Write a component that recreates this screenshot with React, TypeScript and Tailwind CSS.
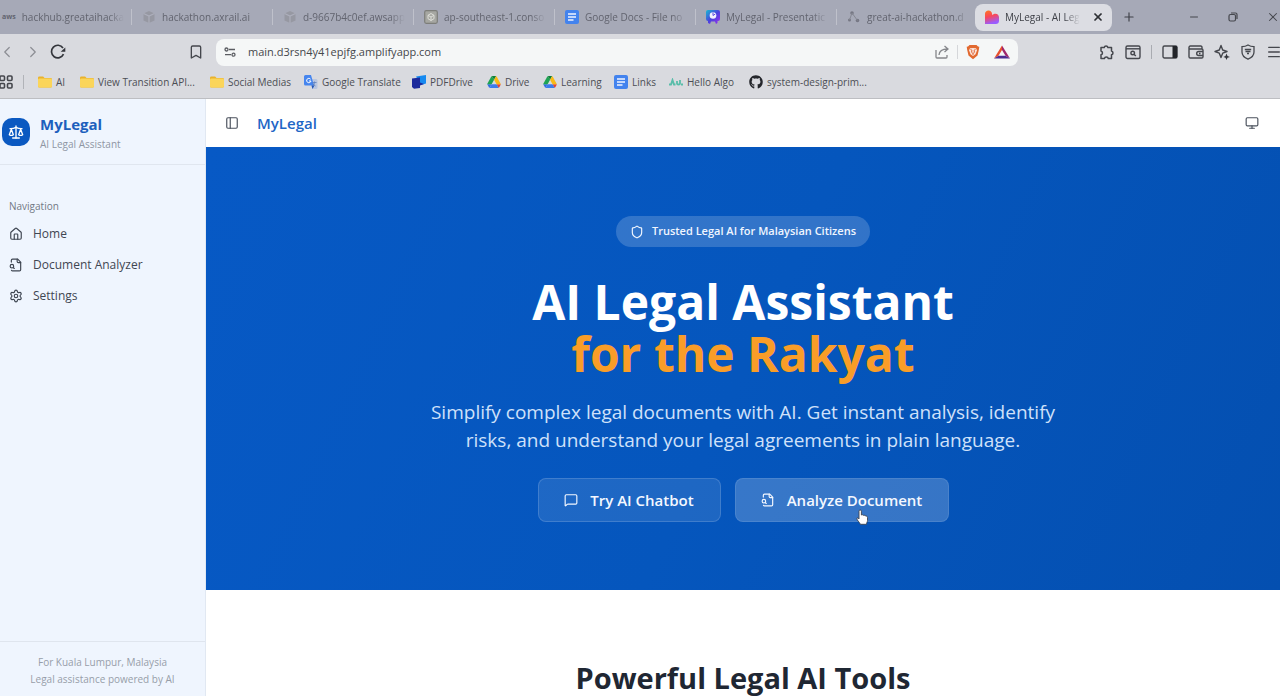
import type { ReactNode } from 'react';
import {
  Bookmark,
  ChevronLeft,
  ChevronRight,
  House,
  Menu,
  MessageSquare,
  Minus,
  Monitor,
  PanelLeft,
  Plus,
  Scale,
  Settings,
  Shield,
  X,
} from 'lucide-react';
import { FaGithub } from 'react-icons/fa';

const DocsIcon = () => (
  <svg viewBox="0 0 14 14" className="size-3.5 shrink-0">
    <rect width="14" height="14" rx="2" fill="#4383ee" />
    <path d="M3 4h8M3 7h8M3 10h5.5" stroke="#f1f5ff" strokeWidth="1.5" />
  </svg>
);

const CubeIcon = () => (
  <svg viewBox="0 0 14 14" className="size-3.5 shrink-0 opacity-60">
    <path d="M7 1 12.500 3.500v7L7 13 1.500 10.500v-7z" fill="#8d8d95" />
    <path d="M7 6v7M1.500 3.500 7 6l5.500-2.500" fill="none" stroke="#b1b3bf" strokeWidth="1.200" />
  </svg>
);

const ConsoleIcon = () => (
  <svg viewBox="0 0 14 14" className="size-3.5 shrink-0">
    <rect x=".7" y=".7" width="12.600" height="12.600" rx="1.500" fill="#a6a7a2" stroke="#7d7e7a" strokeWidth="1.200" />
    <path d="m7 3.500 3 1.800v3.400l-3 1.800-3-1.800V5.300zM4 5.300l3 1.700 3-1.700M7 7v3.500" fill="none" stroke="#dedfd9" />
  </svg>
);

const FolderIcon = () => (
  <svg viewBox="0 0 15 12" className="h-3 w-3.5 shrink-0">
    <path d="M1.500 0h4L7 1.600h6.500A1.500 1.500 0 0 1 15 3v7.500A1.500 1.500 0 0 1 13.500 12h-12A1.500 1.500 0 0 1 0 10.500v-9A1.500 1.500 0 0 1 1.500 0z" fill="#e9b22c" />
    <path d="M1.500 2.200h12A1.500 1.500 0 0 1 15 3.700v6.800a1.500 1.500 0 0 1-1.500 1.500h-12A1.500 1.500 0 0 1 0 10.500V3.700A1.500 1.500 0 0 1 1.500 2.200z" fill="#fbd55a" />
  </svg>
);

const DriveIcon = () => (
  <svg viewBox="0 0 87 78" className="h-3 w-3.5 shrink-0">
    <path d="m7 67 3 6c1 2 2 3 4 4l14-24H0c0 2 0 3 1 4z" fill="#2f6ee0" />
    <path d="M44 25 30 1c-2 1-3 2-4 3L1 48c-1 2-1 3-1 5h28z" fill="#1ea353" />
    <path d="M73 77c2-1 3-2 4-3l9-16c1-2 1-3 1-5H60l6 12z" fill="#e44335" />
    <path d="M44 25 57 1c-1-1-3-1-4-1H34c-2 0-3 0-4 1z" fill="#11803a" />
    <path d="M60 53H28L14 77c1 1 3 1 4 1h51c2 0 3 0 4-1z" fill="#3b7cec" />
    <path d="M73 26 61 4c-1-1-2-2-4-3L44 25l16 28h27c0-2 0-3-1-5z" fill="#f9ba16" />
  </svg>
);

const TranslateIcon = () => (
  <svg viewBox="0 0 14 14" className="size-3.5 shrink-0">
    <path d="M5 4h7a1.500 1.500 0 0 1 1.500 1.500v7A1.500 1.500 0 0 1 12 14H8.500z" fill="#b9c6e0" />
    <path d="M1.500 0H7l3 10.500H1.500A1.500 1.500 0 0 1 0 9V1.500A1.500 1.500 0 0 1 1.500 0z" fill="#4685ee" />
    <path d="M6.600 4.200A2.200 2.200 0 1 0 7 6H5" fill="none" stroke="#fff" />
    <path d="M8.500 7.500h4M10.500 6.500v1c0 1.500-1 2.500-2 3M9 8.500c.5 1 1.500 2 2.500 2.500" fill="none" stroke="#5c7fbd" strokeWidth=".8" />
    <path d="m7.500 10.500 1 3.500 2-3.500z" fill="#2457b5" />
  </svg>
);

const PdfDriveIcon = () => (
  <svg viewBox="0 0 14 14" className="size-3.5 shrink-0">
    <path d="M4 1.500 14 0v8.500L9 10z" fill="#168af0" />
    <path d="M0 3.500 8 2.500v5L12 9l-4 1.500V13l-6 .8L0 12z" fill="#1c2a9c" />
  </svg>
);

const PresentationIcon = () => (
  <svg viewBox="0 0 14 14" className="size-3.5 shrink-0">
    <defs>
      <linearGradient id="deck" x1="0" y1="0" x2="1" y2="1">
        <stop offset="0" stopColor="#16bcd2" />
        <stop offset=".5" stopColor="#4a42dd" />
        <stop offset="1" stopColor="#9a30ee" />
      </linearGradient>
    </defs>
    <path d="M2 0h10a2 2 0 0 1 2 2v7a2 2 0 0 1-2 2h-.5v2l-1.500 1-1-2.500H5L4 14l-2-1v-2a2 2 0 0 1-2-2V2a2 2 0 0 1 2-2z" fill="url(#deck)" />
    <circle cx="7" cy="5.500" r="3.300" fill="#f3f1ff" />
    <path d="M7 5.500V2.500M7 5.500l2.300-1.500" stroke="#5a49de" />
  </svg>
);

const HeartIcon = () => (
  <svg viewBox="0 0 14 14" className="size-3.5 shrink-0">
    <defs>
      <linearGradient id="heart" x1="0" y1="0" x2=".3" y2="1">
        <stop offset="0" stopColor="#ff7a1c" />
        <stop offset=".5" stopColor="#f7475c" />
        <stop offset="1" stopColor="#9a5cff" />
      </linearGradient>
    </defs>
    <path d="M0 3.800C0 1.700 1.600.4 3.500.4S7 1.700 7 3.800v1.500c1-1 2-1.500 3.500-1.500C12.600 3.800 14 5.500 14 7.300v3.400A3.200 3.200 0 0 1 10.800 14H0z" fill="url(#heart)" />
  </svg>
);

const NodesIcon = () => (
  <svg viewBox="0 0 14 14" className="size-3.5 shrink-0" fill="#757783">
    <circle cx="5" cy="3" r="1.800" />
    <circle cx="2.500" cy="10" r="1.500" />
    <circle cx="10.500" cy="10.500" r="1.800" />
    <path d="M5 3 2.500 10M5 3l5.500 7.500" stroke="#858792" />
  </svg>
);

const AlgoIcon = () => (
  <svg viewBox="0 0 14 8" className="h-2 w-3.5 shrink-0" fill="none" stroke="#58bda9" strokeWidth="1.800">
    <path d="M0 6.500h2L3.500 2 5 6.500h1.500M8 3v2.500C8 7 11 7 11 5.500V2M12 6.500h2" />
  </svg>
);

const ReloadIcon = () => (
  <svg viewBox="0 0 16 16" className="size-4">
    <path d="M13.500 10.200A6.300 6.300 0 1 1 13 4" fill="none" stroke="#33353b" strokeWidth="1.700" />
    <path d="M15.300 3.500v4.300h-4.600z" fill="#33353b" />
  </svg>
);

const TuneIcon = () => (
  <svg viewBox="0 0 12 12" className="size-3" fill="none" stroke="#5b5d62" strokeWidth="1.300">
    <circle cx="2.500" cy="3.500" r="1.500" />
    <circle cx="9.500" cy="8.700" r="1.500" />
    <path d="M5 3.500h6M1 8.700h6" />
  </svg>
);

const AppsIcon = () => (
  <svg viewBox="0 0 14 14" className="size-3.5" fill="none" stroke="#45474d" strokeWidth="1.600">
    <rect x="1" y="1" width="4.500" height="4.500" rx="1" />
    <rect x="8.500" y="1" width="4.500" height="4.500" rx="1" />
    <rect x="1" y="8.500" width="4.500" height="4.500" rx="1" />
    <rect x="8.500" y="8.500" width="4.500" height="4.500" rx="1" />
  </svg>
);

const ShareIcon = () => (
  <svg viewBox="0 0 14 14" className="size-3.5" fill="none" stroke="#85878b" strokeWidth="1.300">
    <path d="M1 5v7a1 1 0 0 0 1 1h9a1 1 0 0 0 1-1v-2" />
    <path d="M4 10c.3-3.500 2.500-6 8.500-6M9.500 1 13 4 9.500 7" />
  </svg>
);

const BraveIcon = () => (
  <svg viewBox="0 0 14 16" className="h-4 w-3.5">
    <path d="M3.500 1h7L12 2.500l1.300.2L12.800 6l-1.300 5.500L7 15.200 2.500 11.500 1.200 6 .7 2.700 2 2.500z" fill="#e2692f" />
    <path d="M4 4.300 7 4l3 .3 1 2-1.500 4L7 12l-2.500-1.700L3 6.300z" fill="#fae4da" />
    <path d="m4.500 5.500 1.500.8-.5 2L7 9.500l1.500-1.200-.5-2 1.500-.8M7 9.500V11" fill="none" stroke="#e2693a" />
  </svg>
);

const TriangleIcon = () => (
  <svg viewBox="0 0 16 14" className="h-3.5 w-4">
    <path d="M8 .5 0 13.500l4.500-2.700L8 5z" fill="#e8502c" />
    <path d="M8 .5 16 13.500l-4.500-2.700L8 5z" fill="#a0266b" />
    <path d="M0 13.500h16l-4.500-2.800h-7z" fill="#4e2c92" />
  </svg>
);

const PuzzleIcon = () => (
  <svg viewBox="0 0 16 16" className="size-4" fill="none" stroke="#45474d" strokeWidth="1.500" strokeLinejoin="round">
    <path d="M2 3.500h3.200a1.900 1.900 0 0 1 3.700 0h3.600v3.600a1.900 1.900 0 0 1 0 3.700v3.700H9.300a2 2 0 0 0-3.900 0H2v-3.700a1.900 1.900 0 0 0 0-3.700z" />
  </svg>
);

const SearchTabsIcon = () => (
  <svg viewBox="0 0 16 16" className="size-4" fill="none" stroke="#45474d" strokeWidth="1.400">
    <rect x="1" y="2" width="14" height="12.500" rx="1.500" />
    <path d="M1 4.800h14" />
    <circle cx="7.700" cy="9" r="1.800" />
    <path d="m9 10.300 1.800 1.800" />
  </svg>
);

const SidePanelIcon = () => (
  <svg viewBox="0 0 16 16" className="size-4">
    <rect x="1" y="2" width="14" height="12" rx="1.500" fill="none" stroke="#45474d" strokeWidth="1.400" />
    <path d="M10.500 2H14a1.200 1.200 0 0 1 1.200 1.200v9.600A1.200 1.200 0 0 1 14 14h-3.500z" fill="#222429" />
  </svg>
);

const WalletIcon = () => (
  <svg viewBox="0 0 16 16" className="size-4" fill="none" stroke="#45474d" strokeWidth="1.400">
    <path d="M14 5V3.500A1.300 1.300 0 0 0 12.700 2H2.300A1.300 1.300 0 0 0 1 3.300v9.400A1.300 1.300 0 0 0 2.300 14h11.400a1.300 1.300 0 0 0 1.300-1.300V6.300A1.300 1.300 0 0 0 13.700 5H1" />
    <path d="M15 7.500h-4.300a2 2 0 0 0 0 4H15M11 9.500h1.500" />
  </svg>
);

const SparkleIcon = () => (
  <svg viewBox="0 0 16 16" className="size-4">
    <path d="M7 1.500 8.700 6 13 7.500 8.700 9.200 7 13.500 5.300 9.200 1 7.500 5.300 6z" fill="none" stroke="#45474d" strokeWidth="1.400" strokeLinejoin="round" />
    <path d="m12.500 9.500 1 2.500 2.500.9-2.500.9-1 2.200-1-2.200-2.200-.9 2.200-.9z" fill="#33353b" />
  </svg>
);

const VpnIcon = () => (
  <svg viewBox="0 0 16 16" className="size-4" fill="none" stroke="#45474d" strokeWidth="1.300">
    <path d="M8 1c2 1.300 4 1.700 6 1.700V8c0 3.500-2.500 5.800-6 7.200C4.500 13.800 2 11.500 2 8V2.700C4 2.700 6 2.300 8 1z" />
    <path d="M4.800 5.500h6.400M5.500 7.500h5M7 9.500h2" />
  </svg>
);

const RestoreIcon = () => (
  <svg viewBox="0 0 10 10" className="size-2.5" fill="none" stroke="#45474d" strokeWidth="1.200">
    <rect x="1" y="2.500" width="6.500" height="6.500" rx="1.500" />
    <path d="M3 1h4.500A1.500 1.500 0 0 1 9 2.500V7" />
  </svg>
);

// File outline with the magnifier on its left edge
const AnalyzeIcon = ({ className }: { className?: string }) => (
  <svg viewBox="0 0 24 24" className={className} fill="none" stroke="currentColor" strokeWidth="2" strokeLinecap="round" strokeLinejoin="round">
    <path d="M14 2v4a2 2 0 0 0 2 2h4" />
    <path d="M4.268 21a2 2 0 0 0 1.727 1H18a2 2 0 0 0 2-2V7l-5-5H6a2 2 0 0 0-2 2v3" />
    <path d="m9 18-1.500-1.500" />
    <circle cx="5" cy="14" r="3" />
  </svg>
);

const HandCursor = () => (
  <svg viewBox="0 0 12 16" className="pointer-events-none absolute right-20 -bottom-1 h-4 w-3">
    <path
      d="M3 9V2.200a1.200 1.200 0 0 1 2.400 0V6c1-.5 2-.2 2.200.4 1-.3 1.800 0 2 .6 1-.1 1.900.4 1.900 1.500v3c0 1.500-1 2-1 3.800H4.300c-.3-1.500-2-2.500-3-4.500C.3 9 1 8 3 10z"
      fill="#fff"
      stroke="#3c4450"
      strokeWidth=".9"
    />
  </svg>
);

const TABS: { title: string; icon: ReactNode }[] = [
  { title: 'hackathon.axrail.ai', icon: <CubeIcon /> },
  { title: 'd-9667b4c0ef.awsapp', icon: <CubeIcon /> },
  { title: 'ap-southeast-1.conso', icon: <ConsoleIcon /> },
  { title: 'Google Docs - File no', icon: <DocsIcon /> },
  { title: 'MyLegal - Presentatic', icon: <PresentationIcon /> },
  { title: 'great-ai-hackathon.d', icon: <NodesIcon /> },
];

const BOOKMARKS: { title: string; icon: ReactNode; width: string }[] = [
  { title: 'AI', icon: <FolderIcon />, width: 'w-[42px]' },
  { title: 'View Transition API...', icon: <FolderIcon />, width: 'w-[130px]' },
  { title: 'Social Medias', icon: <FolderIcon />, width: 'w-[94px]' },
  { title: 'Google Translate', icon: <TranslateIcon />, width: 'w-[108px]' },
  { title: 'PDFDrive', icon: <PdfDriveIcon />, width: 'w-[75px]' },
  { title: 'Drive', icon: <DriveIcon />, width: 'w-[56px]' },
  { title: 'Learning', icon: <DriveIcon />, width: 'w-[71px]' },
  { title: 'Links', icon: <DocsIcon />, width: 'w-[55px]' },
  { title: 'Hello Algo', icon: <AlgoIcon />, width: 'w-[80px]' },
  { title: 'system-design-prim...', icon: <FaGithub className="size-3.5 shrink-0 text-[#24262b]" />, width: 'w-[130px]' },
];

const NAV_ITEMS = [
  { label: 'Home', icon: House },
  { label: 'Document Analyzer', icon: AnalyzeIcon },
  { label: 'Settings', icon: Settings },
];

function BrowserTab({ title, icon, first }: { title: string; icon: ReactNode; first?: boolean }) {
  return (
    <div className={`flex h-4 items-center border-r border-[#bfc1cb] pr-2 ${first ? 'w-[132px] pl-0.5' : 'w-[141px] pl-2.5'}`}>
      <button className="flex min-w-0 flex-1 items-center gap-1.5 text-[#62646f]">
        {icon}
        <span className="flex-1 mask-r-from-85% text-left whitespace-nowrap">{title}</span>
      </button>
    </div>
  );
}

function TabStrip() {
  return (
    <div className="flex h-[34px] items-center bg-[#a6a9b7] text-[10px]">
      <BrowserTab first title="hackhub.greataihacka" icon={<span className="w-3.5 text-[7px] font-bold">aws</span>} />
      {TABS.map((tab) => (
        <BrowserTab key={tab.title} title={tab.title} icon={tab.icon} />
      ))}
      <div className="-ml-[3px] flex h-[27px] w-[137px] items-center rounded-lg bg-[#dcdde3] pr-2 pl-2.5">
        <button className="flex min-w-0 flex-1 items-center gap-1.5 text-[#3f4148]">
          <HeartIcon />
          <span className="mask-r-from-80% whitespace-nowrap">MyLegal - AI Leg</span>
        </button>
        <button aria-label="Close tab" className="ml-2">
          <X className="size-3 text-[#2d2f34]" strokeWidth={3.5} />
        </button>
      </div>
      <button aria-label="New tab" className="ml-2.5">
        <Plus className="size-3.5 text-[#3f4148]" />
      </button>
      <div className="ml-auto flex items-center gap-7 text-[#45474d]">
        <button aria-label="Minimize"><Minus className="size-3" /></button>
        <button aria-label="Restore"><RestoreIcon /></button>
        <button aria-label="Close window"><X className="size-3.5" strokeWidth={1.8} /></button>
      </div>
    </div>
  );
}

function Toolbar() {
  return (
    <div className="flex h-9 items-center text-[#45474d]">
      <div className="flex w-[216px] items-center gap-2 pr-3">
        <button aria-label="Back" className="-ml-0.5"><ChevronLeft className="size-[18px] text-[#8b8d93]" strokeWidth={1.6} /></button>
        <button aria-label="Forward"><ChevronRight className="size-[18px] text-[#8b8d93]" strokeWidth={1.6} /></button>
        <button aria-label="Reload"><ReloadIcon /></button>
        <button aria-label="Bookmark" className="ml-auto"><Bookmark className="size-4" /></button>
      </div>
      <div className="flex h-[27px] w-[802px] items-center rounded-lg bg-[#f5f7f7] pr-2 pl-2">
        <button aria-label="Site settings"><TuneIcon /></button>
        <input
          aria-label="Address"
          defaultValue="main.d3rsn4y41epjfg.amplifyapp.com"
          className="ml-3 min-w-0 flex-1 bg-transparent text-[11px] text-[#45474b] outline-none"
        />
        <button aria-label="Share"><ShareIcon /></button>
        <span className="mx-2 h-3.5 w-px bg-[#d5d7da]" />
        <button aria-label="Shields"><BraveIcon /></button>
        <button aria-label="Rewards" className="ml-3.5"><TriangleIcon /></button>
      </div>
      <div className="ml-auto flex items-center gap-2.5">
        <button aria-label="Extensions"><PuzzleIcon /></button>
        <button aria-label="Search tabs"><SearchTabsIcon /></button>
        <span className="h-3.5 w-px bg-[#a9abb1]" />
        <button aria-label="Side panel"><SidePanelIcon /></button>
        <button aria-label="Wallet"><WalletIcon /></button>
        <button aria-label="Assistant"><SparkleIcon /></button>
        <button aria-label="VPN"><VpnIcon /></button>
        <button aria-label="Menu" className="-mr-0.5"><Menu className="size-4" /></button>
      </div>
    </div>
  );
}

function BookmarksBar() {
  return (
    <div className="flex h-7 items-center pb-1 text-[10px] text-[#4c4e54]">
      <button aria-label="Apps" className="-ml-px"><AppsIcon /></button>
      <span className="mr-3.5 ml-2.5 h-3.5 w-px bg-[#b1b3b8]" />
      {BOOKMARKS.map((b) => (
        <a key={b.title} href="#" className={`flex shrink-0 items-center gap-1 whitespace-nowrap ${b.width}`}>
          {b.icon}
          {b.title}
        </a>
      ))}
    </div>
  );
}

function Sidebar() {
  return (
    <aside className="flex w-[206px] shrink-0 flex-col border-r border-[#e1e8f2] bg-[#eff5fe]">
      <div className="flex h-[66px] items-center gap-2.5 border-b border-[#e0e6ef] pl-0.5">
        <div className="flex size-7 items-center justify-center rounded-[10px] bg-[#0b59c1]">
          <Scale className="size-4 text-white" />
        </div>
        <div className="pt-0.5">
          <div className="text-[15px] leading-5 font-bold text-[#1d5fbd]">MyLegal</div>
          <div className="mt-0.5 text-[10px] leading-4 text-[#8e96a3]">AI Legal Assistant</div>
        </div>
      </div>
      <nav className="flex-1 pt-[31px] pl-[9px]">
        <div className="mb-0.5 text-[10px] leading-5 font-medium text-[#727984]">Navigation</div>
        {NAV_ITEMS.map(({ label, icon: Icon }) => (
          <a key={label} href="#" className="flex h-[31px] items-center gap-2.5 text-xs font-medium text-[#3f4652]">
            <Icon className="size-3.5" />
            {label}
          </a>
        ))}
      </nav>
      <footer className="border-t border-[#dfe5ee] px-3 pt-3 pb-2 text-center text-[10px] leading-[17px] text-[#979ea9]">
        <p>For Kuala Lumpur, Malaysia</p>
        <p>Legal assistance powered by AI</p>
      </footer>
    </aside>
  );
}

function Hero() {
  return (
    <section className="flex h-[443px] shrink-0 flex-col items-center bg-linear-115 from-[#0759c5] via-[#0556bd] to-[#044fb0] pt-[69px] text-center">
      <div className="flex h-[31px] items-center gap-2 rounded-full bg-white/18 px-3.5 text-[11px] font-semibold text-[#f0f6ff]">
        <Shield className="size-3.5" />
        Trusted Legal AI for Malaysian Citizens
      </div>
      <h1 className="mt-[29px] text-5xl leading-[52px] font-bold text-white">
        AI Legal Assistant
        <span className="block text-[#f99d28]">for the Rakyat</span>
      </h1>
      <p className="mt-[18px] max-w-[640px] text-[19px] leading-7 text-[#cfe1fa]">
        Simplify complex legal documents with AI. Get instant analysis, identify risks, and understand your legal agreements in plain language.
      </p>
      <div className="mt-6 flex gap-3.5 text-[15px] font-semibold text-[#f4f8ff]">
        <button className="flex h-11 w-[183px] items-center justify-center gap-3 rounded-lg border border-white/15 bg-white/10">
          <MessageSquare className="size-3.5" />
          Try AI Chatbot
        </button>
        <button className="relative flex h-11 w-[214px] items-center justify-center gap-3 rounded-lg border border-white/10 bg-white/20">
          <AnalyzeIcon className="size-3.5" />
          Analyze Document
          <HandCursor />
        </button>
      </div>
    </section>
  );
}

export default function App() {
  return (
    <div className="flex h-screen flex-col overflow-hidden bg-white font-['Open_Sans',sans-serif]">
      <header className="shrink-0 border-b border-[#bdbec2] bg-[#d9dadf]">
        <TabStrip />
        <Toolbar />
        <BookmarksBar />
      </header>
      <div className="flex min-h-0 flex-1">
        <Sidebar />
        <main className="flex min-w-0 flex-1 flex-col overflow-hidden">
          <div className="flex h-12 shrink-0 items-center pr-[21px] pl-[19px]">
            <button aria-label="Toggle sidebar"><PanelLeft className="size-3.5 text-[#4b525d]" /></button>
            <span className="ml-[18px] text-[15px] font-semibold text-[#1e66c6]">MyLegal</span>
            <button aria-label="Theme" className="ml-auto"><Monitor className="size-3.5 text-[#4b525d]" /></button>
          </div>
          <Hero />
          <section className="pt-[70px] text-center">
            <h2 className="text-[29px] leading-9 font-bold text-[#1f2733]">Powerful Legal AI Tools</h2>
          </section>
        </main>
      </div>
    </div>
  );
}
